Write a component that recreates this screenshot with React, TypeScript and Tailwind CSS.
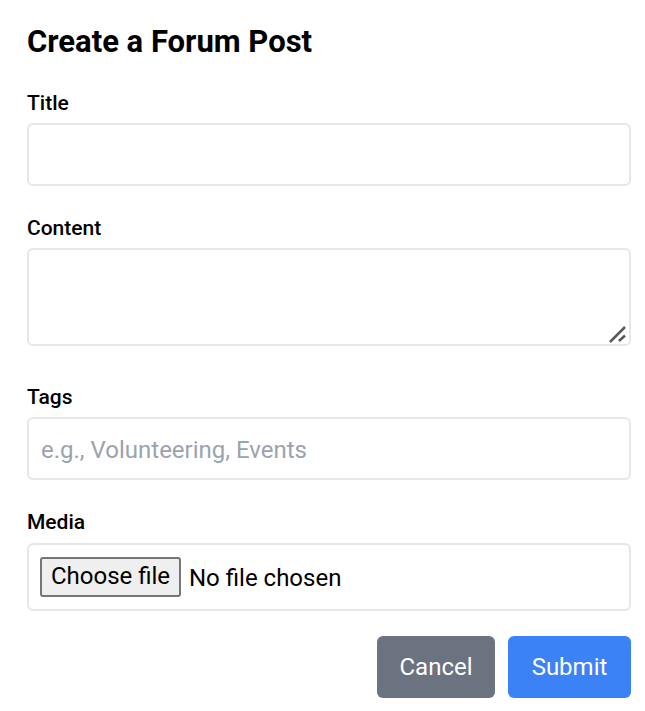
import React from "react";

const font = { fontFamily: "Roboto, 'Liberation Sans', sans-serif" };

function Label({ children, className = "" }: { children: React.ReactNode; className?: string }) {
  return (
    <label className={`block h-[28px] text-[21px] leading-[28px] font-medium text-black ${className}`}>
      {children}
    </label>
  );
}

export default function App() {
  return (
    <div className="min-h-[711px] w-[645px] bg-white text-black" style={font}>
      <div className="pl-[27px] w-[631px]">
        <h1 className="mt-[24px] h-[36px] text-[31px] leading-[36px] font-bold">Create a Forum Post</h1>

        <Label className="mt-[29px]">Title</Label>
        <input
          type="text"
          className="mt-[6px] block h-[63px] w-[604px] rounded-[6px] border-2 border-[#e5e7eb] bg-white px-[12px] text-[24px] outline-none"
        />

        <Label className="mt-[28px]">Content</Label>
        <div className="relative mt-[6px] h-[98px] w-[604px]">
          <textarea className="block h-[98px] w-[604px] resize-none rounded-[6px] border-2 border-[#e5e7eb] bg-white px-[12px] py-[6px] text-[24px] outline-none" />
          <svg
            className="pointer-events-none absolute right-[4px] bottom-[2px]"
            width="18"
            height="18"
            viewBox="0 0 18 18"
          >
            <line x1="1" y1="16" x2="16" y2="1" stroke="#595959" strokeWidth="2.5" />
            <line x1="10" y1="15" x2="16" y2="9.5" stroke="#595959" strokeWidth="2.5" />
          </svg>
        </div>

        <Label className="mt-[37px]">Tags</Label>
        <input
          type="text"
          placeholder="e.g., Volunteering, Events"
          className="mt-[6px] block h-[63px] w-[604px] rounded-[6px] border-2 border-[#e5e7eb] bg-white pl-[12px] pt-[3px] text-[24px] outline-none placeholder:text-[#9ca3af]"
        />

        <Label className="mt-[28px]">Media</Label>
        <div className="mt-[7px] flex h-[68px] w-[604px] items-center rounded-[6px] border-2 border-[#e5e7eb] bg-white pl-[11px]">
          <button
            type="button"
            className="flex h-[40px] w-[141px] items-center justify-center rounded-[3px] border-2 border-[#767676] bg-[#efefef] pb-[3px] text-[24px] leading-[30px] text-black"
          >
            Choose file
          </button>
          <span className="ml-[8px] pt-[2px] text-[24px] leading-[30px] text-black">No file chosen</span>
        </div>

        <div className="mt-[25px] flex justify-end gap-[13px] w-[604px]">
          <button
            type="button"
            className="flex h-[62px] w-[118px] items-center justify-center rounded-[6px] bg-[#6b7280] text-[24px] text-white"
          >
            Cancel
          </button>
          <button
            type="button"
            className="flex h-[62px] w-[123px] items-center justify-center rounded-[6px] bg-[#3b82f6] text-[24px] text-white"
          >
            Submit
          </button>
        </div>
      </div>
    </div>
  );
}
